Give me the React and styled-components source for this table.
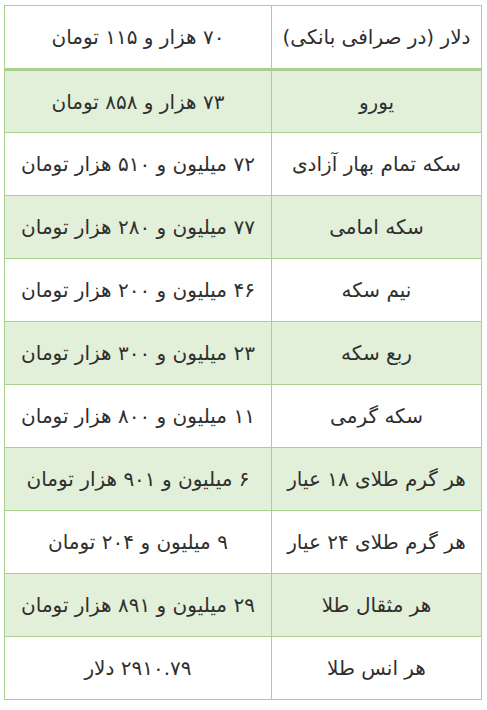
import React from 'react';
import styled, { createGlobalStyle } from 'styled-components';

const rows = [
  { name: 'دلار (در صرافی بانکی)', price: '۷۰ هزار و ۱۱۵ تومان' },
  { name: 'یورو', price: '۷۳ هزار و ۸۵۸ تومان' },
  { name: 'سکه تمام بهار آزادی', price: '۷۲ میلیون و ۵۱۰ هزار تومان' },
  { name: 'سکه امامی', price: '۷۷ میلیون و ۲۸۰ هزار تومان' },
  { name: 'نیم سکه', price: '۴۶ میلیون و ۲۰۰ هزار تومان' },
  { name: 'ربع سکه', price: '۲۳ میلیون و ۳۰۰ هزار تومان' },
  { name: 'سکه گرمی', price: '۱۱ میلیون و ۸۰۰ هزار تومان' },
  { name: 'هر گرم طلای ۱۸ عیار', price: '۶ میلیون و ۹۰۱ هزار تومان' },
  { name: 'هر گرم طلای ۲۴ عیار', price: '۹ میلیون و ۲۰۴ تومان' },
  { name: 'هر مثقال طلا', price: '۲۹ میلیون و ۸۹۱ هزار تومان' },
  { name: 'هر انس طلا', price: '۲۹۱۰.۷۹ دلار' },
];

const GlobalStyle = createGlobalStyle`
  body {
    margin: 0;
    background: #ffffff;
    font-family: "DejaVu Sans", sans-serif;
  }
`;

const Page = styled.div`
  padding: 5px 0 0 4px;
  width: 478px;
`;

const Table = styled.table`
  direction: rtl;
  width: 478px;
  border-collapse: collapse;
  table-layout: fixed;
  border: 1px solid #a9d08e;
`;

const Row = styled.tr`
  background: ${({ shaded }) => (shaded ? '#e2efd9' : '#ffffff')};
  border-bottom: ${({ head }) => (head ? '3px' : '1px')} solid #a9d08e;
`;

const Cell = styled.td`
  height: ${({ head }) => (head ? '64px' : '63px')};
  padding: 0 4px;
  box-sizing: border-box;
  border-left: 1px solid #a9d08e;
  text-align: center;
  vertical-align: middle;
  font-size: 20px;
  color: #2f2f2f;
  white-space: nowrap;
`;

const NameCell = styled(Cell)`
  width: 210px;
`;

export default function App() {
  return (
    <Page>
      <GlobalStyle />
      <Table>
        <tbody>
          {rows.map((r, i) => (
            <Row key={i} head={i === 0} shaded={i % 2 === 1}>
              <NameCell head={i === 0}>{r.name}</NameCell>
              <Cell head={i === 0}>{r.price}</Cell>
            </Row>
          ))}
        </tbody>
      </Table>
    </Page>
  );
}
